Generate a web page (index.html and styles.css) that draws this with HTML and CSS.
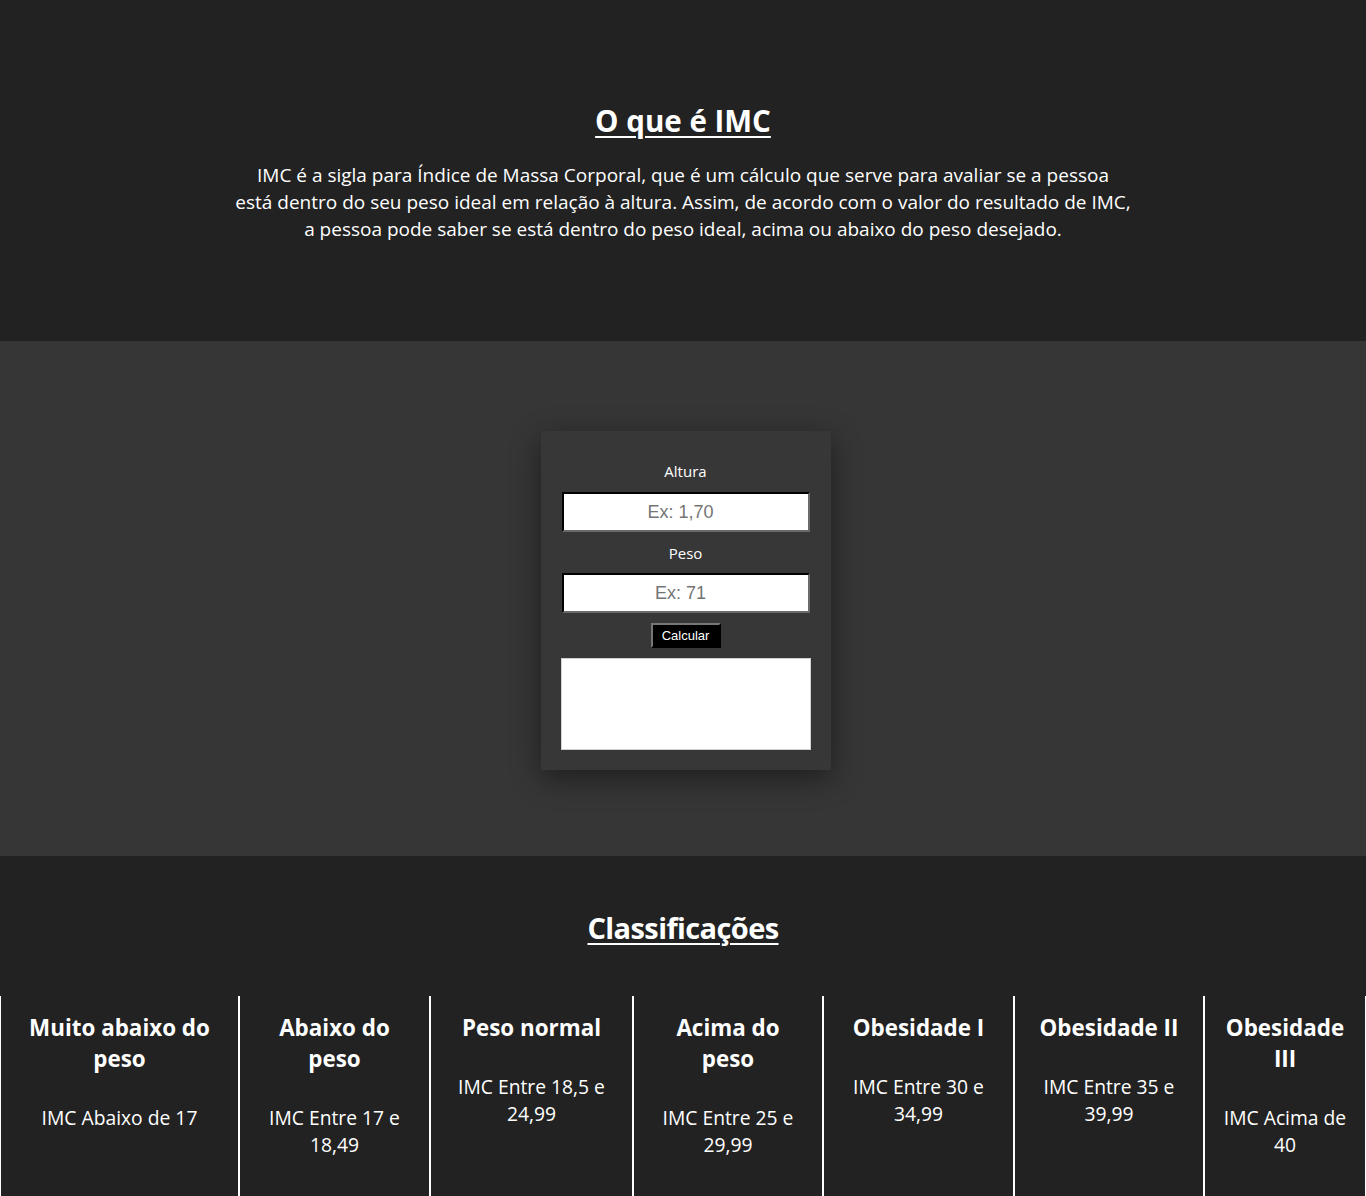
FILE: index.html
```html
<!DOCTYPE html>
<html lang="pt-BR">
<head>
<meta charset="utf-8">
<title>IMC</title>
<link rel="stylesheet" href="styles.css">
</head>
<body>
<section class="intro">
  <h1 class="title">O que é IMC</h1>
  <p class="lead">IMC é a sigla para Índice de Massa Corporal, que é um cálculo que serve para avaliar se a pessoa<br>está dentro do seu peso ideal em relação à altura. Assim, de acordo com o valor do resultado de IMC,<br>a pessoa pode saber se está dentro do peso ideal, acima ou abaixo do peso desejado.</p>
</section>
<section class="calc">
  <form class="box">
    <label class="lbl" for="altura">Altura</label>
    <input class="field" id="altura" type="text" placeholder="Ex: 1,70">
    <label class="lbl lbl-2" for="peso">Peso</label>
    <input class="field" id="peso" type="text" placeholder="Ex: 71">
    <button class="btn" type="button">Calcular</button>
    <div class="result"></div>
  </form>
</section>
<section class="classes">
  <h2 class="title title-sm">Classificações</h2>
  <div class="grid">
    <div class="card"><h3>Muito abaixo do peso</h3><p>IMC Abaixo de 17</p></div>
    <div class="card"><h3>Abaixo do peso</h3><p>IMC Entre 17 e 18,49</p></div>
    <div class="card"><h3>Peso normal</h3><p>IMC Entre 18,5 e 24,99</p></div>
    <div class="card"><h3>Acima do peso</h3><p>IMC Entre 25 e 29,99</p></div>
    <div class="card"><h3>Obesidade I</h3><p>IMC Entre 30 e 34,99</p></div>
    <div class="card"><h3>Obesidade II</h3><p>IMC Entre 35 e 39,99</p></div>
    <div class="card"><h3>Obesidade III</h3><p>IMC Acima de 40</p></div>
  </div>
</section>
</body>
</html>
```
FILE: styles.css
```css
* { box-sizing: border-box; }
html, body { margin: 0; padding: 0; }
body {
  background: #222222;
  color: #ffffff;
  font-family: "Open Sans", "Liberation Sans", sans-serif;
}
.intro {
  background: #222222;
  height: 341px;
  padding-top: 101px;
  text-align: center;
}
.title {
  margin: 0;
  font-size: 29.5px;
  line-height: 40px;
  font-weight: 700;
  text-decoration: underline;
  text-decoration-thickness: 2px;
  text-underline-offset: 4px;
  letter-spacing: 0;
}
.title-sm {
  font-size: 29px;
  letter-spacing: -0.6px;
}
.lead {
  margin: 21px 0 0;
  font-size: 19px;
  line-height: 27px;
  letter-spacing: 0;
}
.calc {
  background: #363636;
  padding: 90px 0 86px 5px;
  display: flex;
  justify-content: center;
}
.box {
  width: 290px;
  background: #373737;
  padding: 30px 20px 20px;
  display: flex;
  flex-direction: column;
  align-items: center;
  box-shadow: 0 8px 28px rgba(0, 0, 0, 0.45);
}
.lbl {
  font-size: 15px;
  line-height: 20px;
  margin-bottom: 11px;
}
.lbl-2 { margin-top: 11px; margin-bottom: 10px; }
.field {
  width: 248px;
  height: 40px;
  border: 2px inset #767676;
  border-top-color: #1e1e1e;
  border-left-color: #1e1e1e;
  border-bottom-color: #6a6a6a;
  border-right-color: #6a6a6a;
  background: #ffffff;
  text-align: center;
  font-family: "Liberation Sans", Arial, sans-serif;
  font-size: 18px;
  padding: 0 10px 0 0;
  outline: none;
}
.field::placeholder { color: #757575; }
.btn {
  margin-top: 10px;
  height: 25px;
  width: 70px;
  padding: 0;
  background: #000000;
  color: #ffffff;
  font-family: "Liberation Sans", Arial, sans-serif;
  font-size: 13px;
  border: 2px outset #6b6b6b;
  border-top-color: #767676;
  border-left-color: #767676;
  border-bottom-color: #3a3a3a;
  border-right-color: #3a3a3a;
}
.result {
  margin-top: 10px;
  width: 250px;
  height: 92px;
  background: #ffffff;
  border: 1px solid #d0d0d0;
}
.classes {
  background: #222222;
  padding-top: 52px;
  text-align: center;
}
.grid {
  margin-top: 48px;
  display: grid;
  grid-template-columns: 239px 191px 203px 190px 191px 190px 162px;
}
.card {
  border-left: 1px solid #ffffff;
  border-right: 1px solid #ffffff;
  min-height: 230px;
  padding: 16px 16px 0;
}
.card h3 {
  margin: 0 0 30px;
  font-size: 22.4px;
  line-height: 31px;
  font-weight: 700;
  letter-spacing: 0;
}
.card p {
  margin: 0;
  font-size: 19.3px;
  line-height: 27px;
  letter-spacing: 0;
}
```
